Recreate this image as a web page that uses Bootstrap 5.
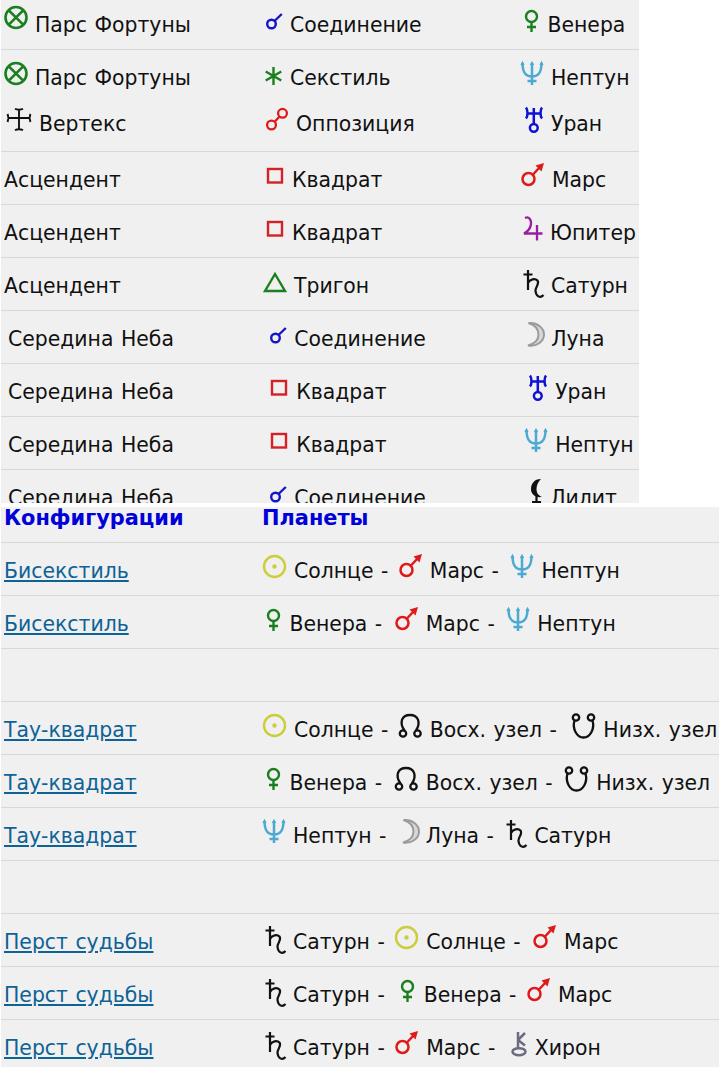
<!DOCTYPE html>
<html lang="ru"><head><meta charset="utf-8"><title>Аспекты</title>
<link rel="stylesheet" href="https://cdn.jsdelivr.net/npm/bootstrap@5.3.0/dist/css/bootstrap.min.css">
<style>
html,body{background:#fff;overflow:hidden;height:1067px}
body{font-family:"DejaVu Sans",sans-serif;font-size:20.4px;word-spacing:1px;color:#111;line-height:46px}
.sheet-top{width:638px;height:503px;margin-left:1px;overflow:hidden;background:#f0f0f0}
.sheet-bottom{width:718px;height:560px;margin-left:1px;margin-top:4px;overflow:hidden;background:#f0f0f0}
.arow{display:flex;white-space:nowrap;padding-top:5px;padding-bottom:1px;height:53px;border-bottom:1px solid #d8d8d8}
.arow.first{padding-top:2px;height:50px}
.arow.tall{height:102px}
.arow.head{height:36px;padding:0;line-height:23px;font-size:20.9px;font-weight:700;color:#0000d8}
.c1{width:261px;padding-left:3px;flex:none}
.c2{width:258px;flex:none}
.c3{flex:1 1 0}
.nudge .c1{padding-left:7px}
.nudge .c2,.nudge .c3{padding-left:4.2px}
.arow a{color:#0d6296}
.g{height:30px;margin-top:-30px;vertical-align:-6px;overflow:visible;fill:none;stroke-width:2.2}
.g.lifted{vertical-align:-2.5px}
.ml2{margin-left:2px}
.ml5{margin-left:5px}
.ml7{margin-left:7px}
.i-pars{width:31px}.i-conj{width:28px}.i-sext{width:28px}.i-opp{width:34px}.i-sq{width:30px}.i-tri{width:32px}
.i-ven{width:27.500px}.i-nep{width:31px}.i-ura{width:31px}.i-mar{width:32px}.i-jup{width:30px}.i-sat{width:31px}
.i-moon{width:27px}.i-lil{width:26px}.i-sun{width:32px}.i-asc{width:32px}.i-dsc{width:32px}.i-vtx{width:35px}.i-chi{width:24px}
.green{stroke:#1b7f1f}.blue{stroke:#1414c8}.red{stroke:#de1a1a}.sky{stroke:#4ba9d2}.ink{stroke:#111}
</style></head><body>
<svg width="0" height="0" class="position-absolute"><defs>
<g id="pars" class="green" stroke-width="2.600"><circle cx="12" cy="12.500" r="10.500"/><path d="M4.800 5.300 19.200 19.700M19.200 5.300 4.800 19.700"/></g>
<g id="conj" class="blue" stroke-width="2.400"><circle cx="9.500" cy="16" r="4.300"/><path d="M12.500 13 19.800 6"/></g>
<g id="sext" class="green" stroke-width="2.400"><path d="M11.500 6V24M3.700 10.500 19.300 19.500M19.300 10.500 3.700 19.500"/></g>
<g id="opp" class="red" stroke-width="2.300"><circle cx="9.500" cy="18" r="4.400"/><circle cx="20.500" cy="6.300" r="4.400"/><path d="M12.500 15 17.500 9.500"/></g>
<g id="sq" stroke="#d42127" stroke-width="2.400"><rect x="6" y="6" width="14" height="13.500"/></g>
<g id="tri" class="green" stroke-width="2.400"><path d="M13 5 23 22H3Z"/></g>
<g id="ven" class="green" stroke-width="2.400"><circle cx="11.500" cy="8.500" r="5.500"/><path d="M11.500 14V24M7 19H16"/></g>
<g id="nep" class="sky" stroke-width="2.500"><path d="M12 2V24M7.500 20H16.500M2.500 2C2.500 13 6.500 15.500 12 15.500S21.500 13 21.500 2"/><path d="M1 4 2.500 1 4 4M20 4 21.500 1 23 4M10.500 4 12 1 13.500 4" stroke-width="1.200"/></g>
<g id="ura" stroke="#1010d4" stroke-width="2.500"><circle cx="13.800" cy="20.800" r="3.900"/><path d="M13.800 1V17M7 6.500H21M6 .500C8 3 8 9 6 11.500M22 .500C20 3 20 9 22 11.500"/></g>
<g id="mar" class="red" stroke-width="2.500"><circle cx="8.500" cy="16" r="6"/><path d="M13 11.500 20 4"/><path d="M24 0 15.500 2.500 21.500 8.500Z" fill="#de1a1a" stroke="none"/></g>
<g id="jup" stroke="#9a1fa0" stroke-width="2.300"><path d="M5 2C9 0 11.500 4 11 8 10.500 12 8 15.500 4 17.500H22.500M17 9V24.500"/></g>
<g id="sat" class="ink" stroke-width="2.200"><path d="M8 1V21M3.500 5.500H12.500M8 14C10 10 15 9 17.500 11.500 20 15 15 18 15.500 22 16 27 20 30 23.500 26"/></g>
<g id="moon" stroke="#9b9b9b" stroke-width="2" fill="#d8d8d8"><path d="M4.500 1C13 0 20 6 20 12.500 20 19 13 25 4 23.500 11 21.500 14.500 17.500 14.500 12.500 14.500 7 11 3 4.500 1Z"/></g>
<g id="lil"><path d="M17 -2C10 -2 7 3 7 8 7 13 11 17 18 16 13.500 14 12.500 11 12.500 8 12.500 4 14 1 17 -2Z" fill="#111"/><path d="M12.500 15V26M8 21H17" stroke="#111" stroke-width="2.200"/></g>
<g id="sun" stroke="#cdcd3c" stroke-width="2.400"><circle cx="12.500" cy="12.500" r="10.500"/><circle cx="12.500" cy="12.500" r="2.200" fill="#cdcd3c" stroke="none"/></g>
<g id="asc" class="ink" stroke-width="2.300"><circle cx="5" cy="20.500" r="3.200"/><circle cx="19.500" cy="20.500" r="3.200"/><path d="M6.500 17.500C1 10 3.500 2 12 2S23 10 18 17.500"/></g>
<g id="dsc" class="ink" stroke-width="2.300"><circle cx="5" cy="4.500" r="3.200"/><circle cx="20" cy="4.500" r="3.200"/><path d="M3.500 7.500C1 16 6 24.500 12.500 24.500S24 16 21.500 7.500"/></g>
<g id="vtx" class="ink" stroke-width="1.900"><path d="M15 2V23M3.500 11H26.500M11 1.800C13 3 17 3 19 1.800M11 23.200C13 22 17 22 19 23.200M3.500 7C4.500 9 4.500 13 3.500 15M26.500 7C25.500 9 25.500 13 26.500 15"/></g>
<g id="chi" stroke="#6b6b82" stroke-width="2.500"><ellipse cx="8" cy="20.700" rx="6.500" ry="3.500"/><path d="M7 1V17M7 9 14 2M7 9 14 14.500"/></g>
</defs></svg>

<div class="sheet-top">
<div class="arow first"><div class="c1"><svg class="g i-pars lifted"><use href="#pars"/></svg>Парс Фортуны</div><div class="c2"><svg class="g i-conj"><use href="#conj"/></svg>Соединение</div><div class="c3"><svg class="g i-ven"><use href="#ven"/></svg>Венера</div></div>
<div class="arow tall"><div class="c1"><svg class="g i-pars"><use href="#pars"/></svg>Парс Фортуны<br><svg class="g i-vtx"><use href="#vtx"/></svg>Вертекс</div><div class="c2"><svg class="g i-sext"><use href="#sext"/></svg>Секстиль<br><svg class="g i-opp"><use href="#opp"/></svg>Оппозиция</div><div class="c3"><svg class="g i-nep"><use href="#nep"/></svg>Нептун<br><svg class="g i-ura"><use href="#ura"/></svg>Уран</div></div>
<div class="arow"><div class="c1">Асцендент</div><div class="c2"><svg class="g i-sq"><use href="#sq"/></svg>Квадрат</div><div class="c3"><svg class="g i-mar"><use href="#mar"/></svg>Марс</div></div>
<div class="arow"><div class="c1">Асцендент</div><div class="c2"><svg class="g i-sq"><use href="#sq"/></svg>Квадрат</div><div class="c3"><svg class="g i-jup"><use href="#jup"/></svg>Юпитер</div></div>
<div class="arow"><div class="c1">Асцендент</div><div class="c2"><svg class="g i-tri"><use href="#tri"/></svg>Тригон</div><div class="c3"><svg class="g i-sat"><use href="#sat"/></svg>Сатурн</div></div>
<div class="arow nudge"><div class="c1">Середина Неба</div><div class="c2"><svg class="g i-conj"><use href="#conj"/></svg>Соединение</div><div class="c3"><svg class="g i-moon"><use href="#moon"/></svg>Луна</div></div>
<div class="arow nudge"><div class="c1">Середина Неба</div><div class="c2"><svg class="g i-sq"><use href="#sq"/></svg>Квадрат</div><div class="c3"><svg class="g i-ura"><use href="#ura"/></svg>Уран</div></div>
<div class="arow nudge"><div class="c1">Середина Неба</div><div class="c2"><svg class="g i-sq"><use href="#sq"/></svg>Квадрат</div><div class="c3"><svg class="g i-nep"><use href="#nep"/></svg>Нептун</div></div>
<div class="arow nudge"><div class="c1">Середина Неба</div><div class="c2"><svg class="g i-conj"><use href="#conj"/></svg>Соединение</div><div class="c3"><svg class="g i-lil"><use href="#lil"/></svg>Лилит</div></div>
</div>

<div class="sheet-bottom">
<div class="arow head"><div class="c1">Конфигурации</div><div class="c2">Планеты</div></div>
<div class="arow"><div class="c1"><a href="#">Бисекстиль</a></div><div><svg class="g i-sun"><use href="#sun"/></svg>Солнце - <svg class="g i-mar ml2"><use href="#mar"/></svg>Марс - <svg class="g i-nep ms-1"><use href="#nep"/></svg>Нептун</div></div>
<div class="arow"><div class="c1"><a href="#">Бисекстиль</a></div><div><svg class="g i-ven"><use href="#ven"/></svg>Венера - <svg class="g i-mar ms-1"><use href="#mar"/></svg>Марс - <svg class="g i-nep ms-1"><use href="#nep"/></svg>Нептун</div></div>
<div class="arow"></div>
<div class="arow"><div class="c1"><a href="#">Тау-квадрат</a></div><div><svg class="g i-sun"><use href="#sun"/></svg>Солнце - <svg class="g i-asc ml2"><use href="#asc"/></svg>Восх. узел - <svg class="g i-dsc ml7"><use href="#dsc"/></svg>Низх. узел</div></div>
<div class="arow"><div class="c1"><a href="#">Тау-квадрат</a></div><div><svg class="g i-ven"><use href="#ven"/></svg>Венера - <svg class="g i-asc ms-1"><use href="#asc"/></svg>Восх. узел - <svg class="g i-dsc ms-1"><use href="#dsc"/></svg>Низх. узел</div></div>
<div class="arow"><div class="c1"><a href="#">Тау-квадрат</a></div><div><svg class="g i-nep"><use href="#nep"/></svg>Нептун - <svg class="g i-moon ml5"><use href="#moon"/></svg>Луна - <svg class="g i-sat ml2"><use href="#sat"/></svg>Сатурн</div></div>
<div class="arow"></div>
<div class="arow"><div class="c1"><a href="#">Перст судьбы</a></div><div><svg class="g i-sat"><use href="#sat"/></svg>Сатурн - <svg class="g i-sun ml2"><use href="#sun"/></svg>Солнце - <svg class="g i-mar ms-1"><use href="#mar"/></svg>Марс</div></div>
<div class="arow"><div class="c1"><a href="#">Перст судьбы</a></div><div><svg class="g i-sat"><use href="#sat"/></svg>Сатурн - <svg class="g i-ven ms-1"><use href="#ven"/></svg>Венера - <svg class="g i-mar ml2"><use href="#mar"/></svg>Марс</div></div>
<div class="arow"><div class="c1"><a href="#">Перст судьбы</a></div><div><svg class="g i-sat"><use href="#sat"/></svg>Сатурн - <svg class="g i-mar ml2"><use href="#mar"/></svg>Марс - <svg class="g i-chi ms-2"><use href="#chi"/></svg>Хирон</div></div>
</div>
<script src="https://cdn.jsdelivr.net/npm/bootstrap@5.3.0/dist/js/bootstrap.bundle.min.js"></script>
</body></html>
